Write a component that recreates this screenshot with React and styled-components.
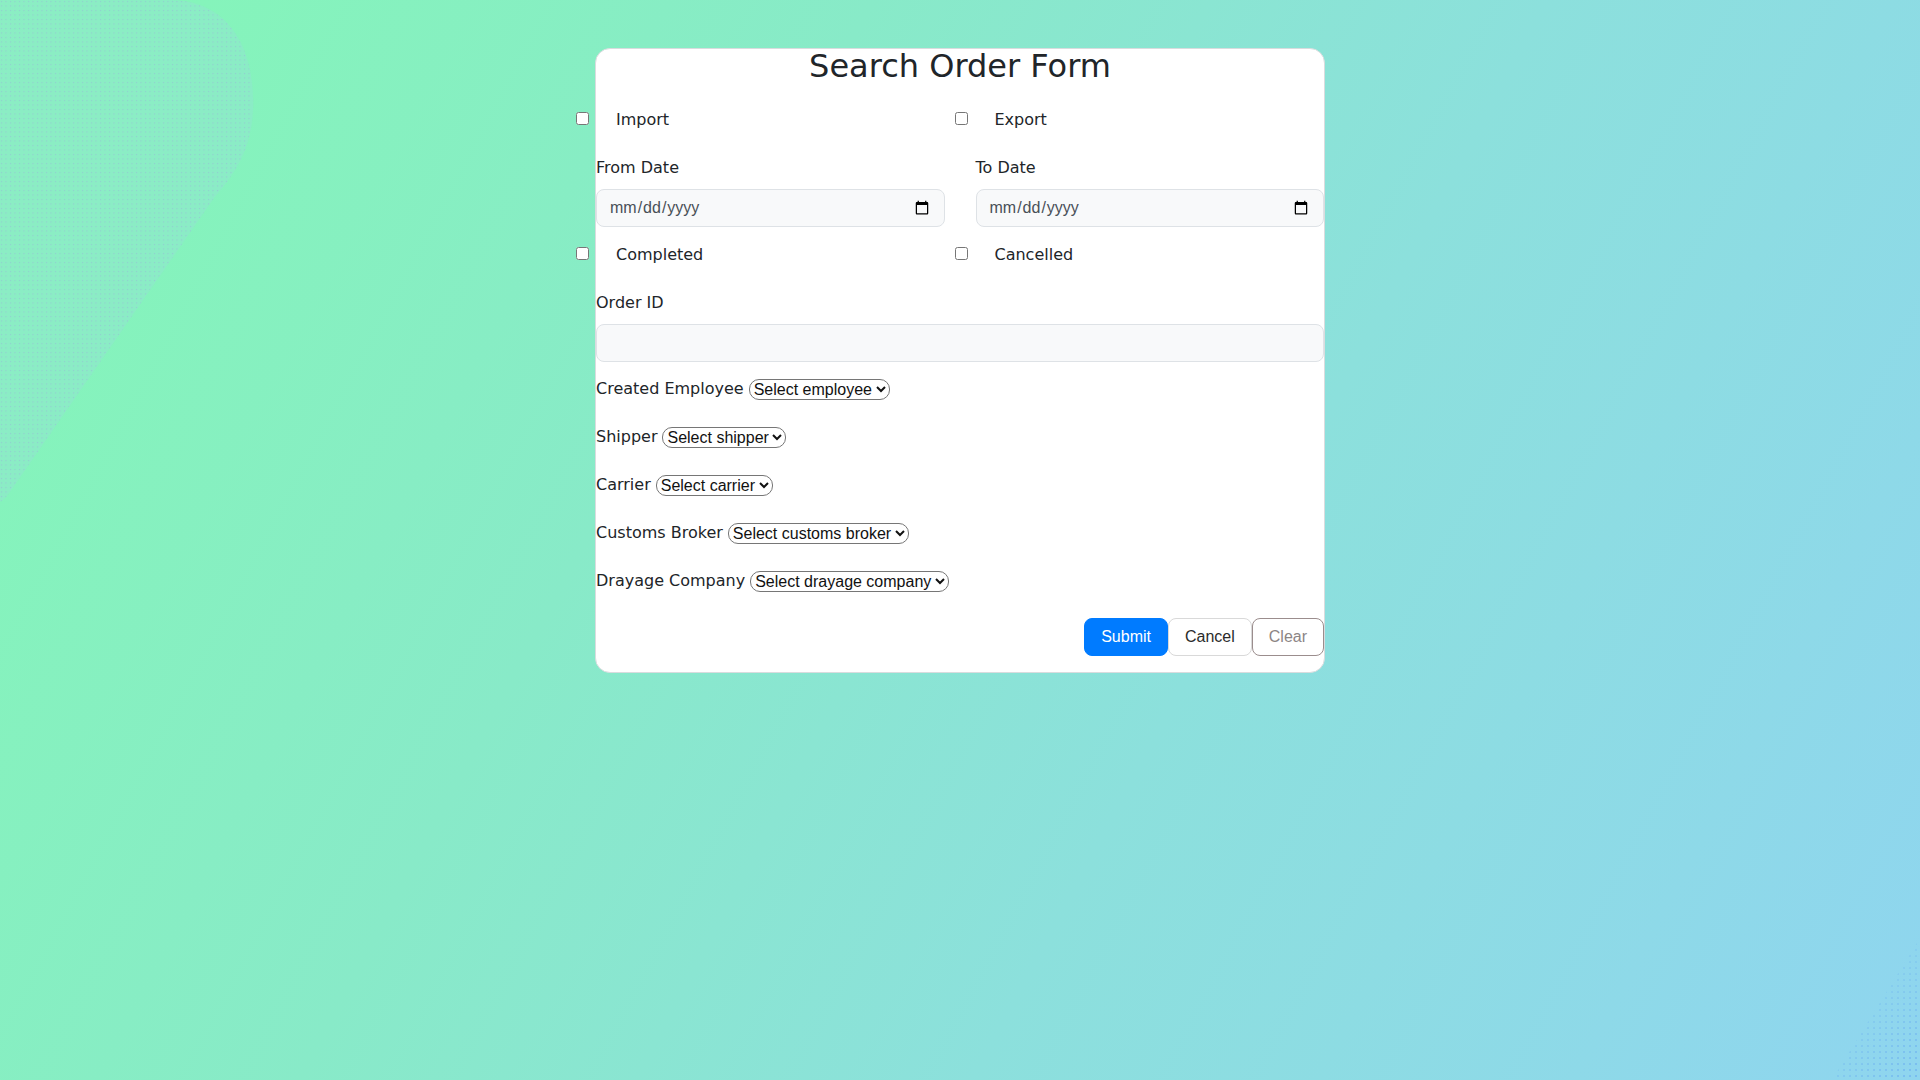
import React from "react";
import styled, { createGlobalStyle } from "styled-components";

const GlobalStyle = createGlobalStyle`
	body {
		margin: 0;
		font-family: "DejaVu Sans", "Liberation Sans", sans-serif;
		color: #212529;
	}
	* {
		box-sizing: border-box;
	}
`;

const Page = styled.div`
	position: relative;
	min-height: 100vh;
	padding-top: 48px;
	overflow: hidden;
	background: linear-gradient(118deg, #84f7b7 0%, #88eac8 35%, #8ce0dc 62%, #8fd5ef 100%);
`;

const Decor = styled.svg`
	position: absolute;
	top: 0;
	left: 0;
	width: 1920px;
	height: 1080px;
	pointer-events: none;
`;

const Card = styled.div`
	position: relative;
	width: 730px;
	margin: 0 auto;
	padding-bottom: 16px;
	background: #fff;
	border: 1px solid #d9dcde;
	border-radius: 15px;
`;

const Title = styled.h1`
	margin: 0;
	font-size: 32px;
	font-weight: 400;
	line-height: 1.1;
	text-align: center;
	color: #212529;
`;

const TwoCols = styled.div`
	display: grid;
	grid-template-columns: 1fr 1fr;
	column-gap: 31px;
	margin-top: ${p => p.$top || 0}px;
`;

const CheckItem = styled.label`
	display: flex;
	align-items: center;
	height: 24px;
	font-size: 16px;
	line-height: 24px;
`;

const Checkbox = styled.input.attrs({ type: "checkbox" })`
	width: 13px;
	height: 13px;
	margin: 0 0 3px ${p => p.$shift}px;
`;

const CheckText = styled.span`
	margin-left: 27px;
`;

const FieldLabel = styled.label`
	display: block;
	margin-bottom: 9px;
	font-size: 16px;
	line-height: 24px;
`;

const TextInput = styled.input`
	display: block;
	width: 100%;
	height: 38px;
	padding: 6px 12px;
	border: 1px solid #dee2e6;
	border-radius: 8px;
	background: #f8f9fa;
	font-family: "Liberation Sans", Arial, sans-serif;
	font-size: 16px;
	color: #495057;
`;

const Block = styled.div`
	margin-top: ${p => p.$top || 0}px;
`;

const SelectRow = styled.div`
	display: flex;
	align-items: center;
	gap: 5px;
	height: 24px;
	margin-top: ${p => p.$top}px;
	font-size: 16px;
	line-height: 24px;
`;

const Select = styled.select`
	height: 21px;
	padding: 0;
	border: 1px solid #767676;
	border-radius: 10px;
	background: #fff;
	font-family: "Liberation Sans", Arial, sans-serif;
	font-size: 16px;
	color: #111;
`;

const ButtonBar = styled.div`
	display: flex;
	justify-content: flex-end;
	margin-top: 25px;
`;

const variants = {
	primary: "background: #007bff; border-color: #007bff; color: #fff;",
	light: "background: #fff; border-color: #d9d9d9; color: #2b2b2b;",
	outline: "background: #fff; border-color: #9b8d8d; color: #8c8585;"
};

const Button = styled.button`
	height: 38px;
	padding: 0 16px;
	border: 1px solid;
	border-radius: 8px;
	font-family: "Liberation Sans", Arial, sans-serif;
	font-size: 16px;
	line-height: 1.5;
	cursor: pointer;
	${p => variants[p.$variant]}
`;

const selects = [
	["Created Employee", "Select employee"],
	["Shipper", "Select shipper"],
	["Carrier", "Select carrier"],
	["Customs Broker", "Select customs broker"],
	["Drayage Company", "Select drayage company"]
];

const Background = () => (
	<Decor viewBox="0 0 1920 1080">
		<defs>
			<pattern id="dotsA" width="4.5" height="4.5" patternUnits="userSpaceOnUse">
				<circle cx="1.5" cy="1.5" r="0.6" fill="#9c9de0" />
			</pattern>
			<pattern id="dotsB" width="6" height="6" patternUnits="userSpaceOnUse">
				<circle cx="2" cy="2" r="0.8" fill="#5a9cf2" />
			</pattern>
			<linearGradient id="fadeB" x1="1" y1="1" x2="0.4" y2="0.2">
				<stop offset="0" stopColor="#fff" stopOpacity="1" />
				<stop offset="1" stopColor="#fff" stopOpacity="0" />
			</linearGradient>
			<mask id="maskB">
				<rect x="1820" y="920" width="100" height="160" fill="url(#fadeB)" />
			</mask>
		</defs>
		<path
			d="M0 0 L170 0 C228 0 256 48 253 110 C251 150 236 172 214 198 L14 486 C8 495 4 500 0 502 Z"
			fill="#8fe8cb"
			opacity="0.6"
		/>
		<path
			d="M0 0 L170 0 C228 0 256 48 253 110 C251 150 236 172 214 198 L14 486 C8 495 4 500 0 502 Z"
			fill="url(#dotsA)"
			opacity="0.5"
		/>
		<path d="M1920 938 L1920 1080 L1832 1080 Z" fill="url(#dotsB)" mask="url(#maskB)" />
	</Decor>
);

export default function App() {
	return (
		<Page>
			<GlobalStyle />
			<Background />
			<Card>
				<Title>Search Order Form</Title>

				<TwoCols $top={24}>
					<CheckItem>
						<Checkbox $shift={-20} />
						<CheckText>Import</CheckText>
					</CheckItem>
					<CheckItem>
						<Checkbox $shift={-21} />
						<CheckText>Export</CheckText>
					</CheckItem>
				</TwoCols>

				<TwoCols $top={24}>
					<div>
						<FieldLabel>From Date</FieldLabel>
						<TextInput type="date" />
					</div>
					<div>
						<FieldLabel>To Date</FieldLabel>
						<TextInput type="date" />
					</div>
				</TwoCols>

				<TwoCols $top={16}>
					<CheckItem>
						<Checkbox $shift={-20} />
						<CheckText>Completed</CheckText>
					</CheckItem>
					<CheckItem>
						<Checkbox $shift={-21} />
						<CheckText>Cancelled</CheckText>
					</CheckItem>
				</TwoCols>

				<Block $top={24}>
					<FieldLabel>Order ID</FieldLabel>
					<TextInput type="text" />
				</Block>

				{selects.map(([label, placeholder], i) => (
					<SelectRow key={label} $top={i === 0 ? 15 : 24}>
						<span>{label}</span>
						<Select defaultValue="">
							<option value="">{placeholder}</option>
						</Select>
					</SelectRow>
				))}

				<ButtonBar>
					<Button $variant="primary">Submit</Button>
					<Button $variant="light">Cancel</Button>
					<Button $variant="outline">Clear</Button>
				</ButtonBar>
			</Card>
		</Page>
	);
}
